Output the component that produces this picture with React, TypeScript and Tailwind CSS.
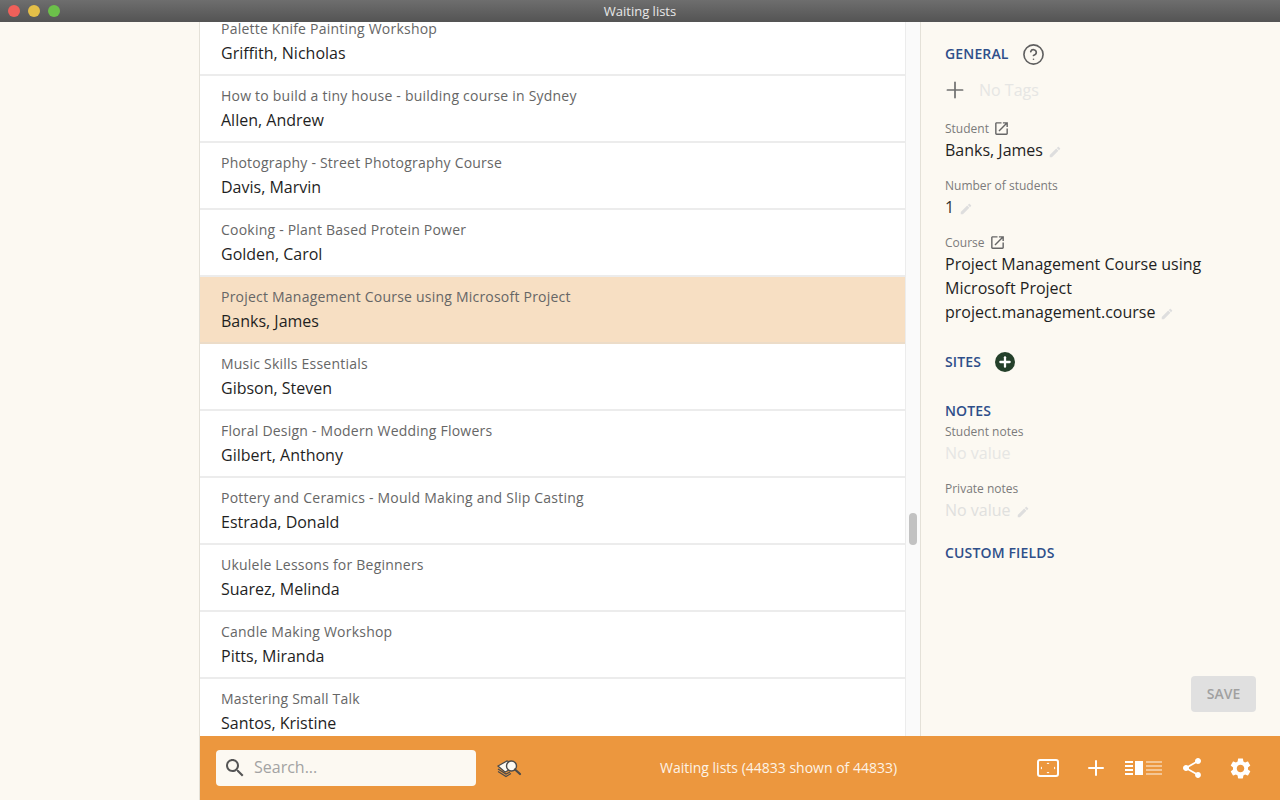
import { Plus, CircleHelp } from "lucide-react";

const rows = [
  ["Palette Knife Painting Workshop", "Griffith, Nicholas"],
  ["How to build a tiny house - building course in Sydney", "Allen, Andrew"],
  ["Photography - Street Photography Course", "Davis, Marvin"],
  ["Cooking - Plant Based Protein Power", "Golden, Carol"],
  ["Project Management Course using Microsoft Project", "Banks, James"],
  ["Music Skills Essentials", "Gibson, Steven"],
  ["Floral Design - Modern Wedding Flowers", "Gilbert, Anthony"],
  ["Pottery and Ceramics - Mould Making and Slip Casting", "Estrada, Donald"],
  ["Ukulele Lessons for Beginners", "Suarez, Melinda"],
  ["Candle Making Workshop", "Pitts, Miranda"],
  ["Mastering Small Talk", "Santos, Kristine"],
];

const Edit = () => (
  <svg className="w-[14px] h-[14px] ml-[5px] mt-[4px] shrink-0" viewBox="0 0 24 24" fill="#dedede">
    <path d="M3 17.25V21h3.75L17.81 9.94l-3.75-3.75L3 17.25zM20.71 7.04c.39-.39.39-1.02 0-1.41l-2.34-2.34c-.39-.39-1.02-.39-1.41 0l-1.83 1.83 3.75 3.75 1.83-1.83z" />
  </svg>
);

const Heading = ({ children }: { children: string }) => (
  <h2 className="text-[14px] leading-[20px] font-semibold tracking-[0.15px] text-[#2f4f8a]">{children}</h2>
);

const Label = ({ children }: { children: string }) => (
  <div className="text-[12px] leading-[16px] text-[#7b7b7b]">{children}</div>
);

const LinkIcon = () => (
  <svg className="w-[17px] h-[17px] -ml-[1px]" viewBox="0 0 24 24" fill="#666666">
    <path d="M19 19H5V5h7V3H5c-1.11 0-2 .9-2 2v14c0 1.1.89 2 2 2h14c1.1 0 2-.9 2-2v-7h-2v7zM14 3v2h3.59l-9.83 9.83 1.41 1.41L19 6.41V10h2V3h-7z" />
  </svg>
);

export default function App() {
  return (
    <div className="h-[800px] w-[1280px] flex flex-col overflow-hidden bg-[#fcf9f2] font-['Open_Sans',sans-serif]">
      {/* Title bar */}
      <div className="h-[22px] shrink-0 relative flex items-center justify-center bg-gradient-to-b from-[#6e6e6e] to-[#545454]">
        <div className="absolute left-[8px] top-[5px] flex gap-[8px]">
          <span className="w-[12px] h-[12px] rounded-full bg-[#f0605a]" />
          <span className="w-[12px] h-[12px] rounded-full bg-[#e4bf48]" />
          <span className="w-[12px] h-[12px] rounded-full bg-[#6cc04a]" />
        </div>
        <span className="text-[13px] leading-none text-[#e8e8e8]">Waiting lists</span>
      </div>

      <div className="flex-1 flex min-h-0">
        <div className="w-[200px] shrink-0 border-r border-[#e4e1d8]" />

        <div className="flex-1 flex flex-col min-w-0">
          <div className="flex-1 flex min-h-0">
            {/* List */}
            <div className="w-[705px] shrink-0 bg-white overflow-hidden">
              <div className="-mt-[13px]">
                {rows.map(([course, student], i) => (
                  <div
                    key={course}
                    className={`h-[67px] pl-[21px] pt-[13px] border-b-2 ${i === 4 ? "bg-[#f7dfc3] border-[#ecdcc8]" : "bg-white border-[#ececec]"}`}
                  >
                    <div className="text-[14px] leading-[14px] text-[#666666] tracking-[0.22px]">{course}</div>
                    <div className="text-[16px] leading-[24px] mt-[5px] text-[#1f1f1f]">{student}</div>
                  </div>
                ))}
              </div>
            </div>

            {/* Scroll track */}
            <div className="w-[15px] shrink-0 bg-[#fafafa] border-l border-[#ececec] relative">
              <div className="absolute left-[3px] top-[491px] w-[8px] h-[32px] rounded-full bg-[#c2c2c2]" />
            </div>

            {/* Detail panel */}
            <div className="flex-1 relative border-l border-[#e4e1d8] pl-[24px] pt-[21px]">
              <div className="flex items-center h-[22px] gap-[13px]">
                <Heading>GENERAL</Heading>
                <CircleHelp className="w-[23px] h-[23px] text-[#606060]" strokeWidth={1.7} />
              </div>
              <div className="flex items-center mt-[14px] h-[22px]">
                <Plus className="w-[26px] h-[26px] -ml-[3px] shrink-0 text-[#707070]" strokeWidth={1.6} />
                <span className="ml-[11px] text-[16px] text-[#e6e6e4]">No Tags</span>
              </div>
              <div className="flex items-center gap-[5px] mt-[19px]">
                <Label>Student</Label>
                <LinkIcon />
              </div>
              <div className="flex items-center text-[16px] leading-[24px] mt-[1px] text-[#1f1f1f]">
                Banks, James <Edit />
              </div>
              <div className="mt-[16px]"><Label>Number of students</Label></div>
              <div className="flex items-center text-[16px] leading-[24px] text-[#333333] mt-[1px]">
                1 <Edit />
              </div>
              <div className="flex items-center gap-[5px] mt-[15px]">
                <Label>Course</Label>
                <LinkIcon />
              </div>
              <div className="text-[16px] leading-[24px] mt-[1px] text-[#1f1f1f] w-[270px]">
                Project Management Course using Microsoft Project
              </div>
              <div className="flex items-center text-[16px] leading-[24px] text-[#1f1f1f]">
                project.management.course <Edit />
              </div>
              <div className="flex items-center gap-[14px] mt-[27px] h-[22px]">
                <Heading>SITES</Heading>
                <span className="w-[20px] h-[20px] rounded-full bg-[#24402a] flex items-center justify-center">
                  <Plus className="w-[16px] h-[16px] text-white" strokeWidth={3.4} />
                </span>
              </div>
              <div className="mt-[28px]"><Heading>NOTES</Heading></div>
              <div className="mt-[3px]"><Label>Student notes</Label></div>
              <div className="text-[16px] leading-[24px] mt-[1px] text-[#e6e6e4]">No value</div>
              <div className="mt-[16px]"><Label>Private notes</Label></div>
              <div className="flex items-center text-[16px] leading-[24px] mt-[1px] text-[#e0e0de]">
                No value <Edit />
              </div>
              <div className="mt-[21px]"><Heading>CUSTOM FIELDS</Heading></div>
              <button className="absolute right-[24px] bottom-[24px] w-[65px] h-[36px] pb-[2px] rounded-[4px] bg-[#e0e0e0] text-[14px] font-semibold text-[#a0a0a0]">
                SAVE
              </button>
            </div>
          </div>

          {/* Bottom bar */}
          <div className="h-[64px] shrink-0 bg-[#ec973e] flex items-center pl-[16px] pr-[27px] text-white">
            <div className="w-[260px] h-[36px] shrink-0 rounded-[4px] bg-[#fcf9f2] flex items-center pl-[7px]">
              <svg className="w-[24px] h-[24px] shrink-0" viewBox="0 0 24 24" fill="#555555">
                <path d="M15.5 14h-.79l-.28-.27C15.41 12.59 16 11.11 16 9.5 16 5.91 13.09 3 9.5 3S3 5.91 3 9.5 5.91 16 9.5 16c1.61 0 3.09-.59 4.23-1.57l.27.28v.79l5 4.99L20.49 19l-4.99-5zm-6 0C7.01 14 5 11.99 5 9.5S7.01 5 9.5 5 14 7.01 14 9.5 11.99 14 9.5 14z" />
              </svg>
              <span className="ml-[7px] -mt-[2px] text-[16px] text-[#a3a3a3]">Search...</span>
            </div>
            <svg className="ml-[20px] w-[26px] h-[22px] shrink-0" viewBox="0 0 26 22" fill="none">
              <path d="M2 9l9-5 5 2-3 7-4 2z" fill="#fcf9f2" stroke="#4a4a4a" strokeWidth="1.2" />
              <path d="M2 12l8 5 4-2M2 14.5l8 5 5-3" stroke="#4a4a4a" strokeWidth="1.2" />
              <circle cx="15.5" cy="9" r="5" fill="#fcf9f2" stroke="#4a4a4a" strokeWidth="1.4" />
              <path d="M19 12.5l5 4.5" stroke="#4a4a4a" strokeWidth="2.2" strokeLinecap="round" />
            </svg>
            <div className="ml-[138px] -mt-[2px] text-[14px] text-[#fdf3e6] whitespace-nowrap">
              Waiting lists (44833 shown of 44833)
            </div>
            <div className="ml-auto flex items-center">
              <svg className="w-[22px] h-[18px] shrink-0" viewBox="0 0 22 18" fill="none">
                <rect x="1" y="1" width="20" height="16" rx="2" stroke="white" strokeWidth="2" />
                <path d="M11 3.5l-1.5 1.5h3zM11 14.5L9.5 13h3zM3.5 9L5 7.5v3zM18.5 9L17 7.5v3z" fill="white" />
              </svg>
              <Plus className="ml-[25px] w-[24px] h-[24px] shrink-0 text-white" strokeWidth={2} />
              <svg className="ml-[17px] w-[37px] h-[14px] shrink-0" viewBox="0 0 37 14" fill="white">
                <path d="M0 0h8v2H0zM0 4h8v2H0zM0 8h8v2H0zM0 12h8v2H0z" />
                <path d="M10 0h8v14h-8z" />
                <path opacity="0.45" d="M21 0h16v2H21zM21 4h16v2H21zM21 8h16v2H21zM21 12h16v2H21z" />
              </svg>
              <svg className="ml-[18px] w-[24px] h-[24px] shrink-0" viewBox="0 0 24 24" fill="white">
                <path d="M18 16.08c-.76 0-1.44.3-1.96.77L8.91 12.7c.05-.23.09-.46.09-.7s-.04-.47-.09-.7l7.05-4.11c.54.5 1.25.81 2.04.81 1.66 0 3-1.34 3-3s-1.34-3-3-3-3 1.34-3 3c0 .24.04.47.09.7L8.04 9.81C7.5 9.31 6.79 9 6 9c-1.66 0-3 1.34-3 3s1.34 3 3 3c.79 0 1.5-.31 2.04-.81l7.12 4.16c-.05.21-.08.43-.08.65 0 1.61 1.31 2.92 2.92 2.92 1.61 0 2.92-1.31 2.92-2.92s-1.31-2.92-2.92-2.92z" />
              </svg>
              <svg className="ml-[24px] w-[25px] h-[25px] shrink-0" viewBox="0 0 24 24" fill="white">
                <path d="M19.14 12.94c.04-.3.06-.61.06-.94 0-.32-.02-.64-.07-.94l2.03-1.58c.18-.14.23-.41.12-.61l-1.92-3.32c-.12-.22-.37-.29-.59-.22l-2.39.96c-.5-.38-1.03-.7-1.62-.94l-.36-2.54c-.04-.24-.24-.41-.48-.41h-3.84c-.24 0-.43.17-.47.41l-.36 2.54c-.59.24-1.13.57-1.62.94l-2.39-.96c-.22-.08-.47 0-.59.22L2.74 8.87c-.12.21-.08.47.12.61l2.03 1.58c-.05.3-.09.63-.09.94s.02.64.07.94l-2.03 1.58c-.18.14-.23.41-.12.61l1.92 3.32c.12.22.37.29.59.22l2.39-.96c.5.38 1.03.7 1.62.94l.36 2.54c.05.24.24.41.48.41h3.84c.24 0 .44-.17.47-.41l.36-2.54c.59-.24 1.13-.56 1.62-.94l2.39.96c.22.08.47 0 .59-.22l1.92-3.32c.12-.22.07-.47-.12-.61l-2.01-1.58zM12 15.6c-1.98 0-3.6-1.62-3.6-3.6s1.62-3.6 3.6-3.6 3.6 1.62 3.6 3.6-1.62 3.6-3.6 3.6z" />
              </svg>
            </div>
          </div>
        </div>
      </div>
    </div>
  );
}
